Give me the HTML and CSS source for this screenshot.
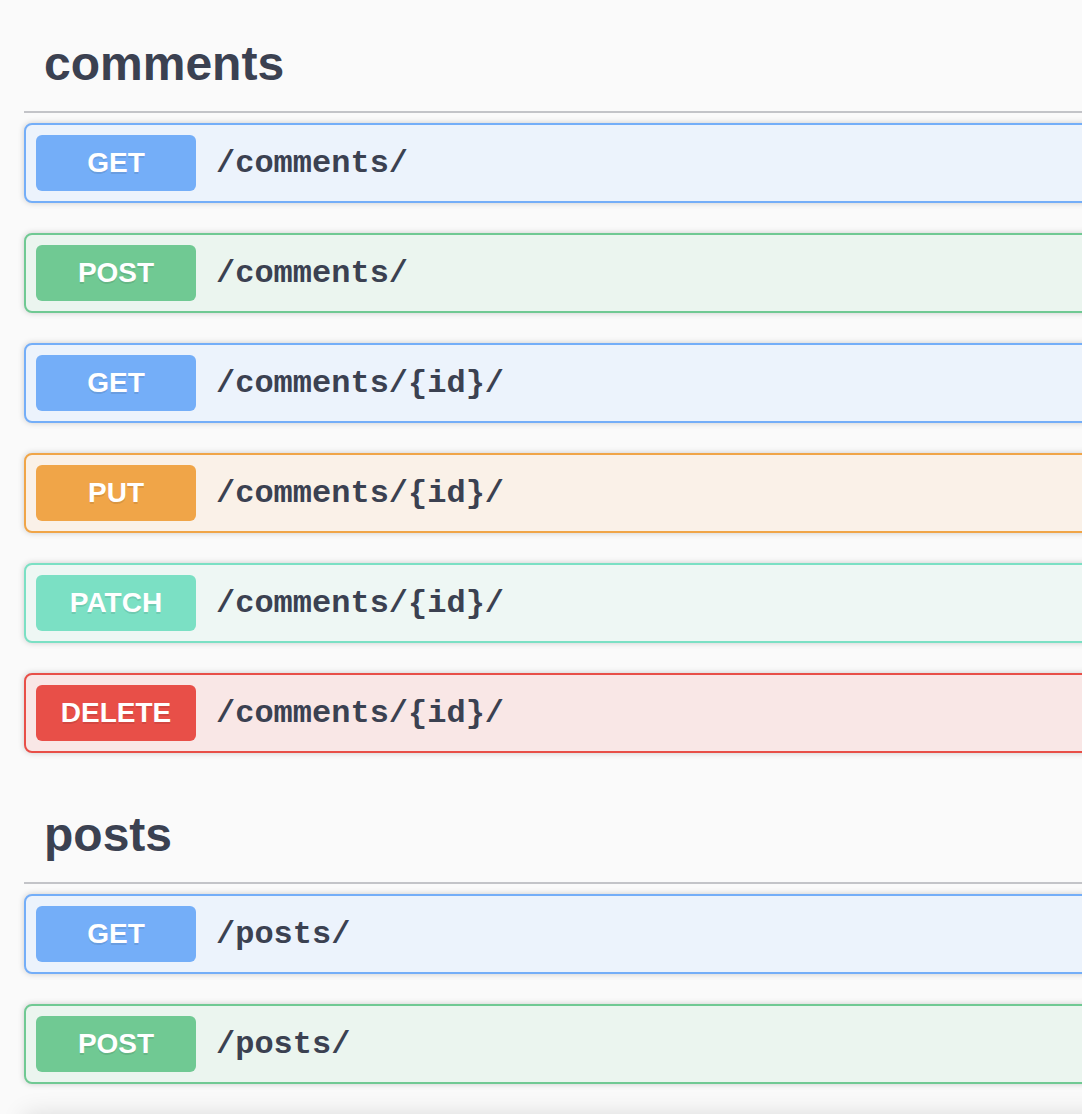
FILE: index.html
```html
<!DOCTYPE html>
<html>
<head>
<meta charset="utf-8">
<link rel="stylesheet" href="styles.css">
</head>
<body>
<div class="page">
  <section class="tag-section">
    <h4 class="tag">comments</h4>
    <div class="opblock get"><span class="method">GET</span><span class="path">/comments/</span></div>
    <div class="opblock post"><span class="method">POST</span><span class="path">/comments/</span></div>
    <div class="opblock get"><span class="method">GET</span><span class="path">/comments/{id}/</span></div>
    <div class="opblock put"><span class="method">PUT</span><span class="path">/comments/{id}/</span></div>
    <div class="opblock patch"><span class="method">PATCH</span><span class="path">/comments/{id}/</span></div>
    <div class="opblock delete"><span class="method">DELETE</span><span class="path">/comments/{id}/</span></div>
  </section>
  <section class="tag-section">
    <h4 class="tag">posts</h4>
    <div class="opblock get"><span class="method">GET</span><span class="path">/posts/</span></div>
    <div class="opblock post"><span class="method">POST</span><span class="path">/posts/</span></div>
  </section>
  <div class="next-block"></div>
</div>
</body>
</html>
```

FILE: styles.css
```css
html, body {
  margin: 0;
  padding: 0;
  background: #fafafa;
  overflow: hidden;
}

.page {
  padding: 12px 0 0 24px;
  width: 1200px;
  font-family: "Liberation Sans", Arial, sans-serif;
  color: #3b4151;
}

.tag-section {
  display: flex;
  flex-direction: column;
}

.tag {
  margin: 0 0 10px 0;
  padding: 22px 40px 18px 20px;
  font-size: 48px;
  line-height: 59px;
  font-weight: bold;
  color: #3b4151;
  border-bottom: 2px solid #c3c4c8;
}

.opblock {
  display: flex;
  align-items: center;
  margin: 0 0 30px 0;
  padding: 10px;
  border: 2px solid;
  border-radius: 8px;
  box-shadow: 0 0 6px rgba(0, 0, 0, 0.19);
}

.method {
  box-sizing: border-box;
  min-width: 160px;
  padding: 12px 0;
  border-radius: 6px;
  font-size: 28px;
  line-height: 32px;
  font-weight: bold;
  color: #fff;
  text-align: center;
  text-shadow: 0 2px 0 rgba(0, 0, 0, 0.1);
}

.path {
  padding: 0 20px;
  font-family: "Liberation Mono", "Courier New", monospace;
  font-size: 32px;
  font-weight: bold;
  color: #3b4151;
}

.get { background: #ecf3fc; border-color: #74aef8; }
.get .method { background: #74aef8; }

.post { background: #ebf5ef; border-color: #70c993; }
.post .method { background: #70c993; }

.put { background: #faf1e8; border-color: #f0a548; }
.put .method { background: #f0a548; }

.patch { background: #eef7f4; border-color: #7be0c4; }
.patch .method { background: #7be0c4; }

.delete { background: #f9e7e6; border-color: #e84f48; }
.delete .method { background: #e84f48; }

.next-block {
  height: 60px;
  background: #f7f7f7;
  box-shadow: 0 0 24px rgba(0, 0, 0, 0.12);
}
```
